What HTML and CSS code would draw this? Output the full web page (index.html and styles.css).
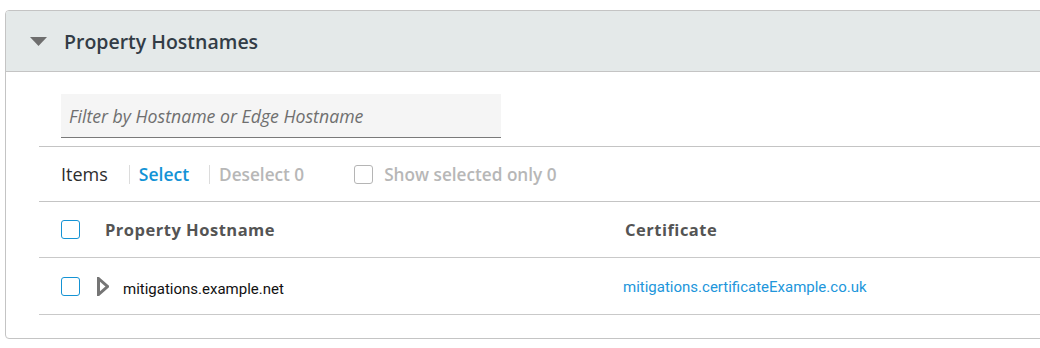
FILE: index.html
```html
<!DOCTYPE html>
<html>
<head>
<meta charset="utf-8">
<link rel="stylesheet" href="styles.css">
</head>
<body>
<section class="panel">
  <header class="panel-head">
    <svg class="caret" width="17" height="10" viewBox="0 0 17 10"><polygon points="0,0 17,0 8.5,9" fill="#6e6e6e"/></svg>
    <h2 class="panel-title">Property Hostnames</h2>
  </header>
  <div class="panel-body">
    <div class="filter">
      <span class="filter-ph">Filter by Hostname or Edge Hostname</span>
    </div>
    <div class="toolbar">
      <span class="tb-items">Items</span>
      <span class="sep"></span>
      <span class="tb-select">Select</span>
      <span class="sep"></span>
      <span class="tb-deselect">Deselect 0</span>
      <span class="tb-check"></span>
      <span class="tb-show">Show selected only 0</span>
    </div>
    <div class="row head-row">
      <span class="cb"></span>
      <span class="col-host th">Property Hostname</span>
      <span class="col-cert th">Certificate</span>
    </div>
    <div class="row data-row">
      <span class="cb"></span>
      <svg class="expand" width="12" height="19" viewBox="0 0 12 19"><polygon points="1.5,1.5 10.5,9.5 1.5,17.5" fill="none" stroke="#757575" stroke-width="3" stroke-linejoin="miter"/></svg>
      <span class="td">mitigations.example.net</span>
      <span class="link">mitigations.certificateExample.co.uk</span>
    </div>
  </div>
</section>
</body>
</html>
```
FILE: styles.css
```css
html, body { margin: 0; padding: 0; background: #fff; overflow: hidden; }
body { width: 1040px; height: 348px; }
.panel {
  margin: 10px 0 0 5px;
  width: 1100px;
  border: 1px solid #c4c4c4;
  border-radius: 4px;
  box-sizing: border-box;
  height: 329px;
  overflow: hidden;
}
.panel-head {
  height: 60px;
  background: #e4e9e9;
  border-bottom: 1px solid #c4c4c4;
  display: flex;
  align-items: center;
  padding-left: 24px;
}
.caret { display: block; margin-top: 1px; }
.panel-title {
  margin: 0 0 0 17px;
  font-family: "Open Sans", sans-serif;
  font-weight: 600;
  font-size: 19.5px;
  color: #323c46;
}
.panel-body { padding: 22px 0 0 33px; }
.filter {
  margin-left: 22px;
  width: 440px;
  height: 44px;
  box-sizing: border-box;
  background: #f5f5f5;
  border-bottom: 1px solid #7a7a7a;
  display: flex;
  align-items: center;
  padding-left: 8px;
}
.filter-ph {
  font-family: "Open Sans", sans-serif;
  font-style: italic;
  font-size: 17.7px;
  color: #6f6f6f;
  margin-top: 1px;
}
.toolbar {
  margin-top: 8px;
  height: 56px;
  box-sizing: border-box;
  border-top: 1px solid #c4c4c4;
  border-bottom: 1px solid #c4c4c4;
  display: flex;
  align-items: center;
  padding-left: 22px;
  font-family: "Open Sans", sans-serif;
  font-size: 17.2px;
}
.tb-items { color: #2d2d2d; font-size: 18px; }
.sep { width: 1px; height: 19px; background: #dcdcdc; margin: 0 9px 0 21px; }
.tb-select { color: #1393d6; font-weight: 600; font-size: 17.5px; }
.tb-select + .sep { margin-left: 20px; }
.tb-deselect { color: #b7b7b7; font-weight: 600; }
.tb-check {
  width: 17px; height: 17px;
  border: 1px solid #b5b5b5; border-radius: 3px;
  margin-left: 50px; margin-right: 11px;
}
.tb-show { color: #b7b7b7; font-weight: 600; }
.row {
  display: flex;
  align-items: center;
  border-bottom: 1px solid #c9c9c9;
  padding-left: 22px;
}
.head-row { height: 56px; box-sizing: border-box; }
.data-row { height: 57px; box-sizing: border-box; }
.cb {
  width: 17px; height: 17px;
  border: 1px solid #1593d4; border-radius: 3px;
  flex: none;
}
.th {
  font-family: "Open Sans", sans-serif;
  font-weight: 700;
  font-size: 16.5px;
  color: #545454;
  letter-spacing: 0.5px;
}
.col-host { margin-left: 25px; width: 520px; }
.expand { display: block; margin-left: 17px; flex: none; }
.td {
  font-family: Roboto, sans-serif;
  font-size: 15px;
  color: #111;
  margin-left: 14px;
  width: 500px;
  padding-top: 5px;
}
.link {
  font-family: Roboto, sans-serif;
  font-size: 15px;
  color: #2196db;
  padding-top: 2px;
}
```
